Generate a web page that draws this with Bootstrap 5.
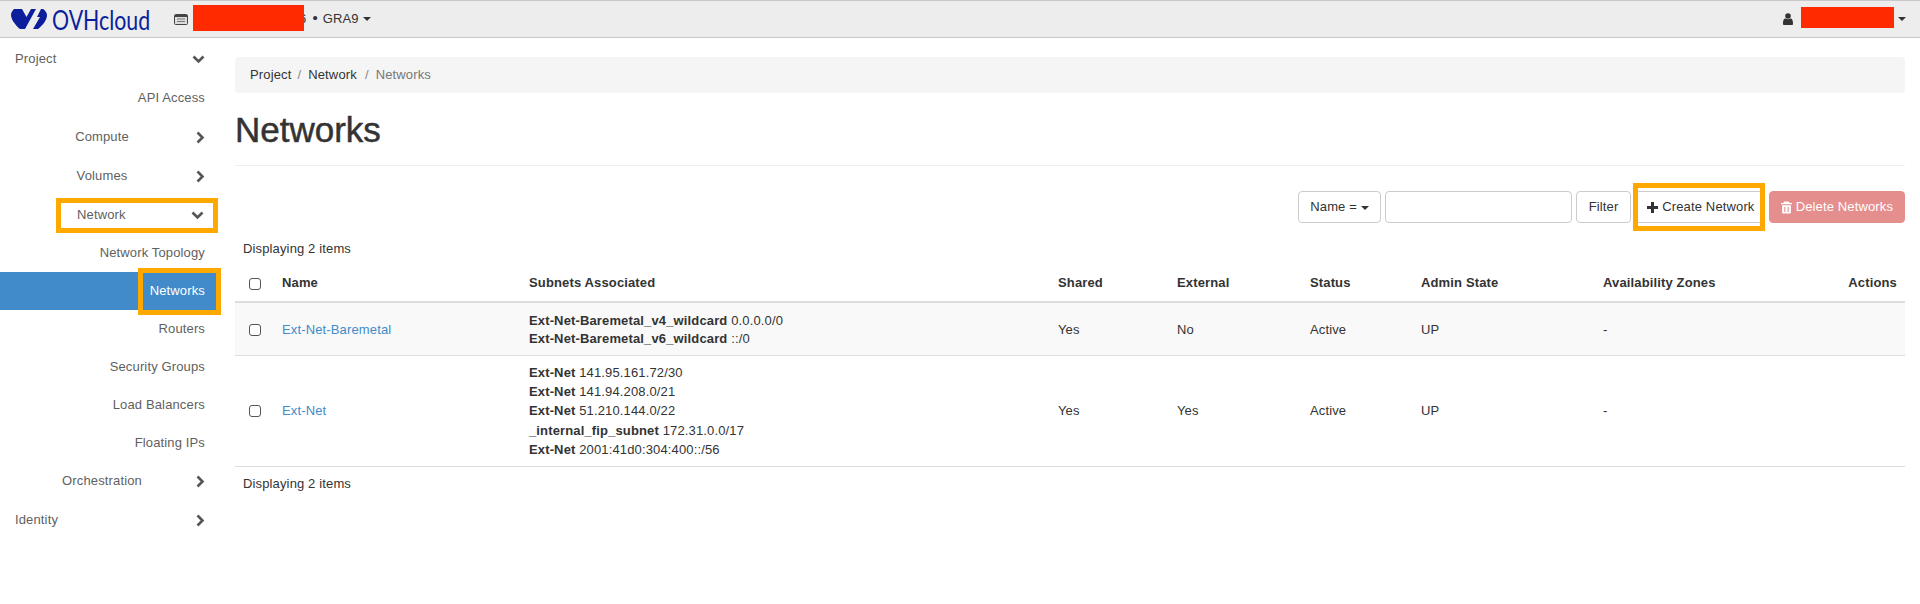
<!DOCTYPE html>
<html lang="en">
<head>
    <meta charset="UTF-8">
    <title>Networks</title>
    <link href="https://cdn.jsdelivr.net/npm/bootstrap@5.3.0/dist/css/bootstrap.min.css" rel="stylesheet">
    <style>
        html, body { height: 100%; }
        body {
            font-family: "Liberation Sans", Arial, sans-serif;
            font-size: 13px;
            line-height: 18.5px;
            letter-spacing: .14px;
            color: #333;
            overflow: hidden;
        }
        .topbar {
            height: 38px;
            background: #ededed;
            border-top: 1px solid #c8c8c8;
            border-bottom: 1px solid #c8c8c8;
            padding: 0 14px 0 10px;
        }
        .logo-text { font-family: Lato, "Liberation Sans", sans-serif; font-size: 27px; font-weight: 400; color: #0b1f9c; letter-spacing: 0; margin-left: 4px; line-height: 1; width: 100px; transform: scaleX(.79); transform-origin: left center; }
        .redact { position: absolute; background: #ff2a00; }
        .redact-a { left: 193px; top: 5px; width: 111px; height: 26px; }
        .redact-b { left: 1801px; top: 7px; width: 93px; height: 21px; }
        .caret-dn { display: inline-block; border-top: 4px solid #333; border-left: 4px solid transparent; border-right: 4px solid transparent; vertical-align: middle; }
        .project-icon { margin-left: 22px; }
        .project-name { margin-left: 111px; }
        .dot-sep { margin: 0 5px 0 6px; font-size: 15px; line-height: 1; }
        .side-col { width: 222px; flex: none; padding-top: 2px; }
        .side-item {
            height: 39px;
            color: #5f5f5f;
            padding-right: 17px;
            position: relative;
        }
        .side-head { padding-left: 15px; }
        .side-item.side-sub { justify-content: flex-end; }
        .side-name-mid { flex: 1; text-align: center; padding-left: 8px; }
        .side-h38 { height: 38px; }
        .side-h37 { height: 37px; }
        .side-active { background: #428bca; color: #fff; height: 38px; margin: 0 5px 0 0; padding-right: 12px; }
        .side-flag { outline: 5px solid #ffa800; outline-offset: -5px; margin-left: 56px; width: 162px; height: 35px; padding: 0 14px 0 21px; }
        .flag-box { position: absolute; left: 138px; top: -4px; width: 83px; height: 47px; border: 5px solid #ffa800; }
        .main-col { padding: 19px 15px 0 13px; min-width: 0; flex: 1; }
        .crumbs { background: #f5f5f5; border-radius: 4px; height: 36px; padding: 0 15px; margin: 0; }
        .crumbs .breadcrumb-item { font-size: 13px; color: #777; }
        .crumbs .breadcrumb-item a { color: #333; text-decoration: none; }
        .crumbs .breadcrumb-item + .breadcrumb-item { padding-left: 6px; }
        .crumbs .breadcrumb-item + .breadcrumb-item::before { padding-right: 7px; color: #888; }
        .crumbs .breadcrumb-item.active { padding-left: 8px; }
        .page-title { font-size: 35px; font-weight: 400; -webkit-text-stroke: .5px #333; letter-spacing: 0; line-height: 40px; margin: 17px 0 0; padding-bottom: 15px; border-bottom: 1px solid #eee; color: #333; }
        .tools { margin-top: 25px; height: 32px; gap: 4px; }
        .tools .btn, .tools .form-control { font-size: 13px; height: 32px; border-radius: 4px; border-color: #ccc; color: #333; padding: 0; line-height: 30px; letter-spacing: .14px; }
        .tools .form-control { width: 187px; flex: none; }
        .tools .btn-name { width: 83px; }
        .tools .btn-filter { width: 55px; }
        .tools .btn-create { width: 128px; margin-left: 2px; border-radius: 0; }
        .tools .btn-del { width: 136px; background: #e58e8e; border-color: #e58e8e; color: #fff; }
        .create-wrap { position: relative; display: inline-flex; }
        .create-flag { position: absolute; left: -2px; top: -8px; width: 132px; height: 48px; border: 5px solid #ffa800; pointer-events: none; }
        .count-line { padding: 17px 8px 0; height: 43px; color: #333; margin: 0; }
        .net-table { width: 100%; margin: 0; border-collapse: collapse; table-layout: fixed; }
        .net-table th { font-weight: 700; height: 36px; padding: 0 8px; border-bottom: 2px solid #ddd; vertical-align: middle; color: #333; }
        .net-table td { padding: 7px 8px; line-height: 19.2px; vertical-align: middle; border-bottom: 1px solid #ddd; color: #333; }
        .net-table tbody tr:first-child td { background: #f9f9f9; padding: 8.5px 8px 6.5px; line-height: 18.5px; }
        .net-table a { color: #428bca; text-decoration: none; }
        .tick { width: 12px; height: 12px; border: 1px solid #555; border-radius: 3px; display: block; margin-left: 6px; background: #fff; appearance: none; }
    </style>
</head>
<body>
    <header class="topbar d-flex align-items-center">
        <svg width="38" height="20" viewBox="0 0 38 20">
            <path fill="#0b1f9c" d="M4 0h8l4.500 8L21 0h5L15 20h-5C5 16 1 10 1 6c0-2 1-4 3-6z"/>
            <path fill="#0b1f9c" d="M31 0l-4 8h3l-7 12h5c5-4 9-9 9-14 0-2-2-5-4-6z"/>
        </svg>
        <span class="logo-text">OVHcloud</span>
        <svg class="project-icon" width="14" height="11" viewBox="0 0 14 11">
            <rect x=".5" y=".5" width="13" height="10" rx="1" fill="#dcdcdc" stroke="#444"/>
            <path stroke="#444" stroke-width="2" d="M1 2h12"/>
            <path stroke="#777" d="M3 5h8M3 7.500h8"/>
        </svg>
        <span class="project-name">6<span class="dot-sep">&#8226;</span>GRA9</span>
        <span class="caret-dn ms-1"></span>
        <span class="ms-auto d-flex align-items-center">
            <svg width="10" height="12" viewBox="0 0 10 12"><circle cx="5" cy="3" r="2.800" fill="#333"/><path fill="#333" d="M0 11c0-4 1-5.500 2.500-5.500 1.500 1 3.500 1 5 0C9 5.500 10 7 10 11c0 .6-.5 1-1 1H1c-.5 0-1-.4-1-1z"/></svg>
            <span style="width:105px"></span>
            <span class="caret-dn"></span>
        </span>
    </header>
    <div class="redact redact-a"></div>
    <div class="redact redact-b"></div>

    <div class="d-flex">
        <nav class="side-col">
            <div class="side-item side-head d-flex align-items-center justify-content-between">Project
                <svg width="13" height="9" viewBox="0 0 13 9"><path d="M1.500 1.500l5 5 5-5" fill="none" stroke="#555" stroke-width="2.600"/></svg></div>
            <div class="side-item side-sub d-flex align-items-center">API Access</div>
            <div class="side-item d-flex align-items-center"><span class="side-name-mid">Compute</span>
                <svg width="9" height="13" viewBox="0 0 9 13"><path d="M1.500 1.500l5 5-5 5" fill="none" stroke="#555" stroke-width="2.600"/></svg></div>
            <div class="side-item d-flex align-items-center"><span class="side-name-mid">Volumes</span>
                <svg width="9" height="13" viewBox="0 0 9 13"><path d="M1.500 1.500l5 5-5 5" fill="none" stroke="#555" stroke-width="2.600"/></svg></div>
            <div class="side-item d-flex align-items-center" style="padding-right:0"><div class="side-flag d-flex align-items-center"><span class="flex-grow-1">Network</span>
                <svg width="13" height="9" viewBox="0 0 13 9"><path d="M1.500 1.500l5 5 5-5" fill="none" stroke="#555" stroke-width="2.600"/></svg></div></div>
            <div class="side-item side-sub side-h37 d-flex align-items-center">Network Topology</div>
            <div class="side-item side-sub side-active d-flex align-items-center">Networks<span class="flag-box"></span></div>
            <div class="side-item side-sub side-h38 d-flex align-items-center">Routers</div>
            <div class="side-item side-sub side-h38 d-flex align-items-center">Security Groups</div>
            <div class="side-item side-sub side-h38 d-flex align-items-center">Load Balancers</div>
            <div class="side-item side-sub side-h38 d-flex align-items-center">Floating IPs</div>
            <div class="side-item d-flex align-items-center"><span class="side-name-mid">Orchestration</span>
                <svg width="9" height="13" viewBox="0 0 9 13"><path d="M1.500 1.500l5 5-5 5" fill="none" stroke="#555" stroke-width="2.600"/></svg></div>
            <div class="side-item side-head d-flex align-items-center justify-content-between">Identity
                <svg width="9" height="13" viewBox="0 0 9 13"><path d="M1.500 1.500l5 5-5 5" fill="none" stroke="#555" stroke-width="2.600"/></svg></div>
        </nav>

        <main class="main-col">
            <ol class="breadcrumb crumbs align-items-center">
                <li class="breadcrumb-item"><a href="#">Project</a></li>
                <li class="breadcrumb-item"><a href="#">Network</a></li>
                <li class="breadcrumb-item active">Networks</li>
            </ol>
            <h1 class="page-title">Networks</h1>

            <div class="tools d-flex justify-content-end align-items-center">
                <button class="btn btn-light bg-white btn-name">Name = <span class="caret-dn"></span></button>
                <input class="form-control" type="text">
                <button class="btn btn-light bg-white btn-filter">Filter</button>
                <span class="create-wrap">
                    <button class="btn btn-light bg-white btn-create"><svg width="11" height="11" viewBox="0 0 11 11"><path fill="#333" d="M4 0h3v4h4v3H7v4H4V7H0V4h4z"/></svg> Create Network</button>
                    <span class="create-flag"></span>
                </span>
                <button class="btn btn-del"><svg width="11" height="13" viewBox="0 0 10 11"><path fill="#fff" d="M3 0h4l1 1.500h2v1H0v-1h2zM1 3.500h8V10c0 .6-.4 1-1 1H2c-.6 0-1-.4-1-1zM3 5v4.500h1V5zm3 0v4.500h1V5z"/></svg> Delete Networks</button>
            </div>

            <p class="count-line">Displaying 2 items</p>

            <table class="net-table">
                <colgroup>
                    <col style="width:39px"><col style="width:247px"><col style="width:529px"><col style="width:119px"><col style="width:133px"><col style="width:111px"><col style="width:182px"><col style="width:167px"><col>
                </colgroup>
                <thead>
                    <tr>
                        <th><input class="tick" type="checkbox"></th>
                        <th>Name</th>
                        <th>Subnets Associated</th>
                        <th>Shared</th>
                        <th>External</th>
                        <th>Status</th>
                        <th>Admin State</th>
                        <th>Availability Zones</th>
                        <th class="text-end">Actions</th>
                    </tr>
                </thead>
                <tbody>
                    <tr>
                        <td><input class="tick" type="checkbox"></td>
                        <td><a href="#">Ext-Net-Baremetal</a></td>
                        <td><b>Ext-Net-Baremetal_v4_wildcard</b> 0.0.0.0/0<br><b>Ext-Net-Baremetal_v6_wildcard</b> ::/0</td>
                        <td>Yes</td>
                        <td>No</td>
                        <td>Active</td>
                        <td>UP</td>
                        <td>-</td>
                        <td></td>
                    </tr>
                    <tr>
                        <td><input class="tick" type="checkbox"></td>
                        <td><a href="#">Ext-Net</a></td>
                        <td><b>Ext-Net</b> 141.95.161.72/30<br><b>Ext-Net</b> 141.94.208.0/21<br><b>Ext-Net</b> 51.210.144.0/22<br><b>_internal_fip_subnet</b> 172.31.0.0/17<br><b>Ext-Net</b> 2001:41d0:304:400::/56</td>
                        <td>Yes</td>
                        <td>Yes</td>
                        <td>Active</td>
                        <td>UP</td>
                        <td>-</td>
                        <td></td>
                    </tr>
                </tbody>
            </table>
            <p class="count-line" style="padding-top:8px">Displaying 2 items</p>
        </main>
    </div>
    <script src="https://cdn.jsdelivr.net/npm/bootstrap@5.3.0/dist/js/bootstrap.bundle.min.js"></script>
</body>
</html>
